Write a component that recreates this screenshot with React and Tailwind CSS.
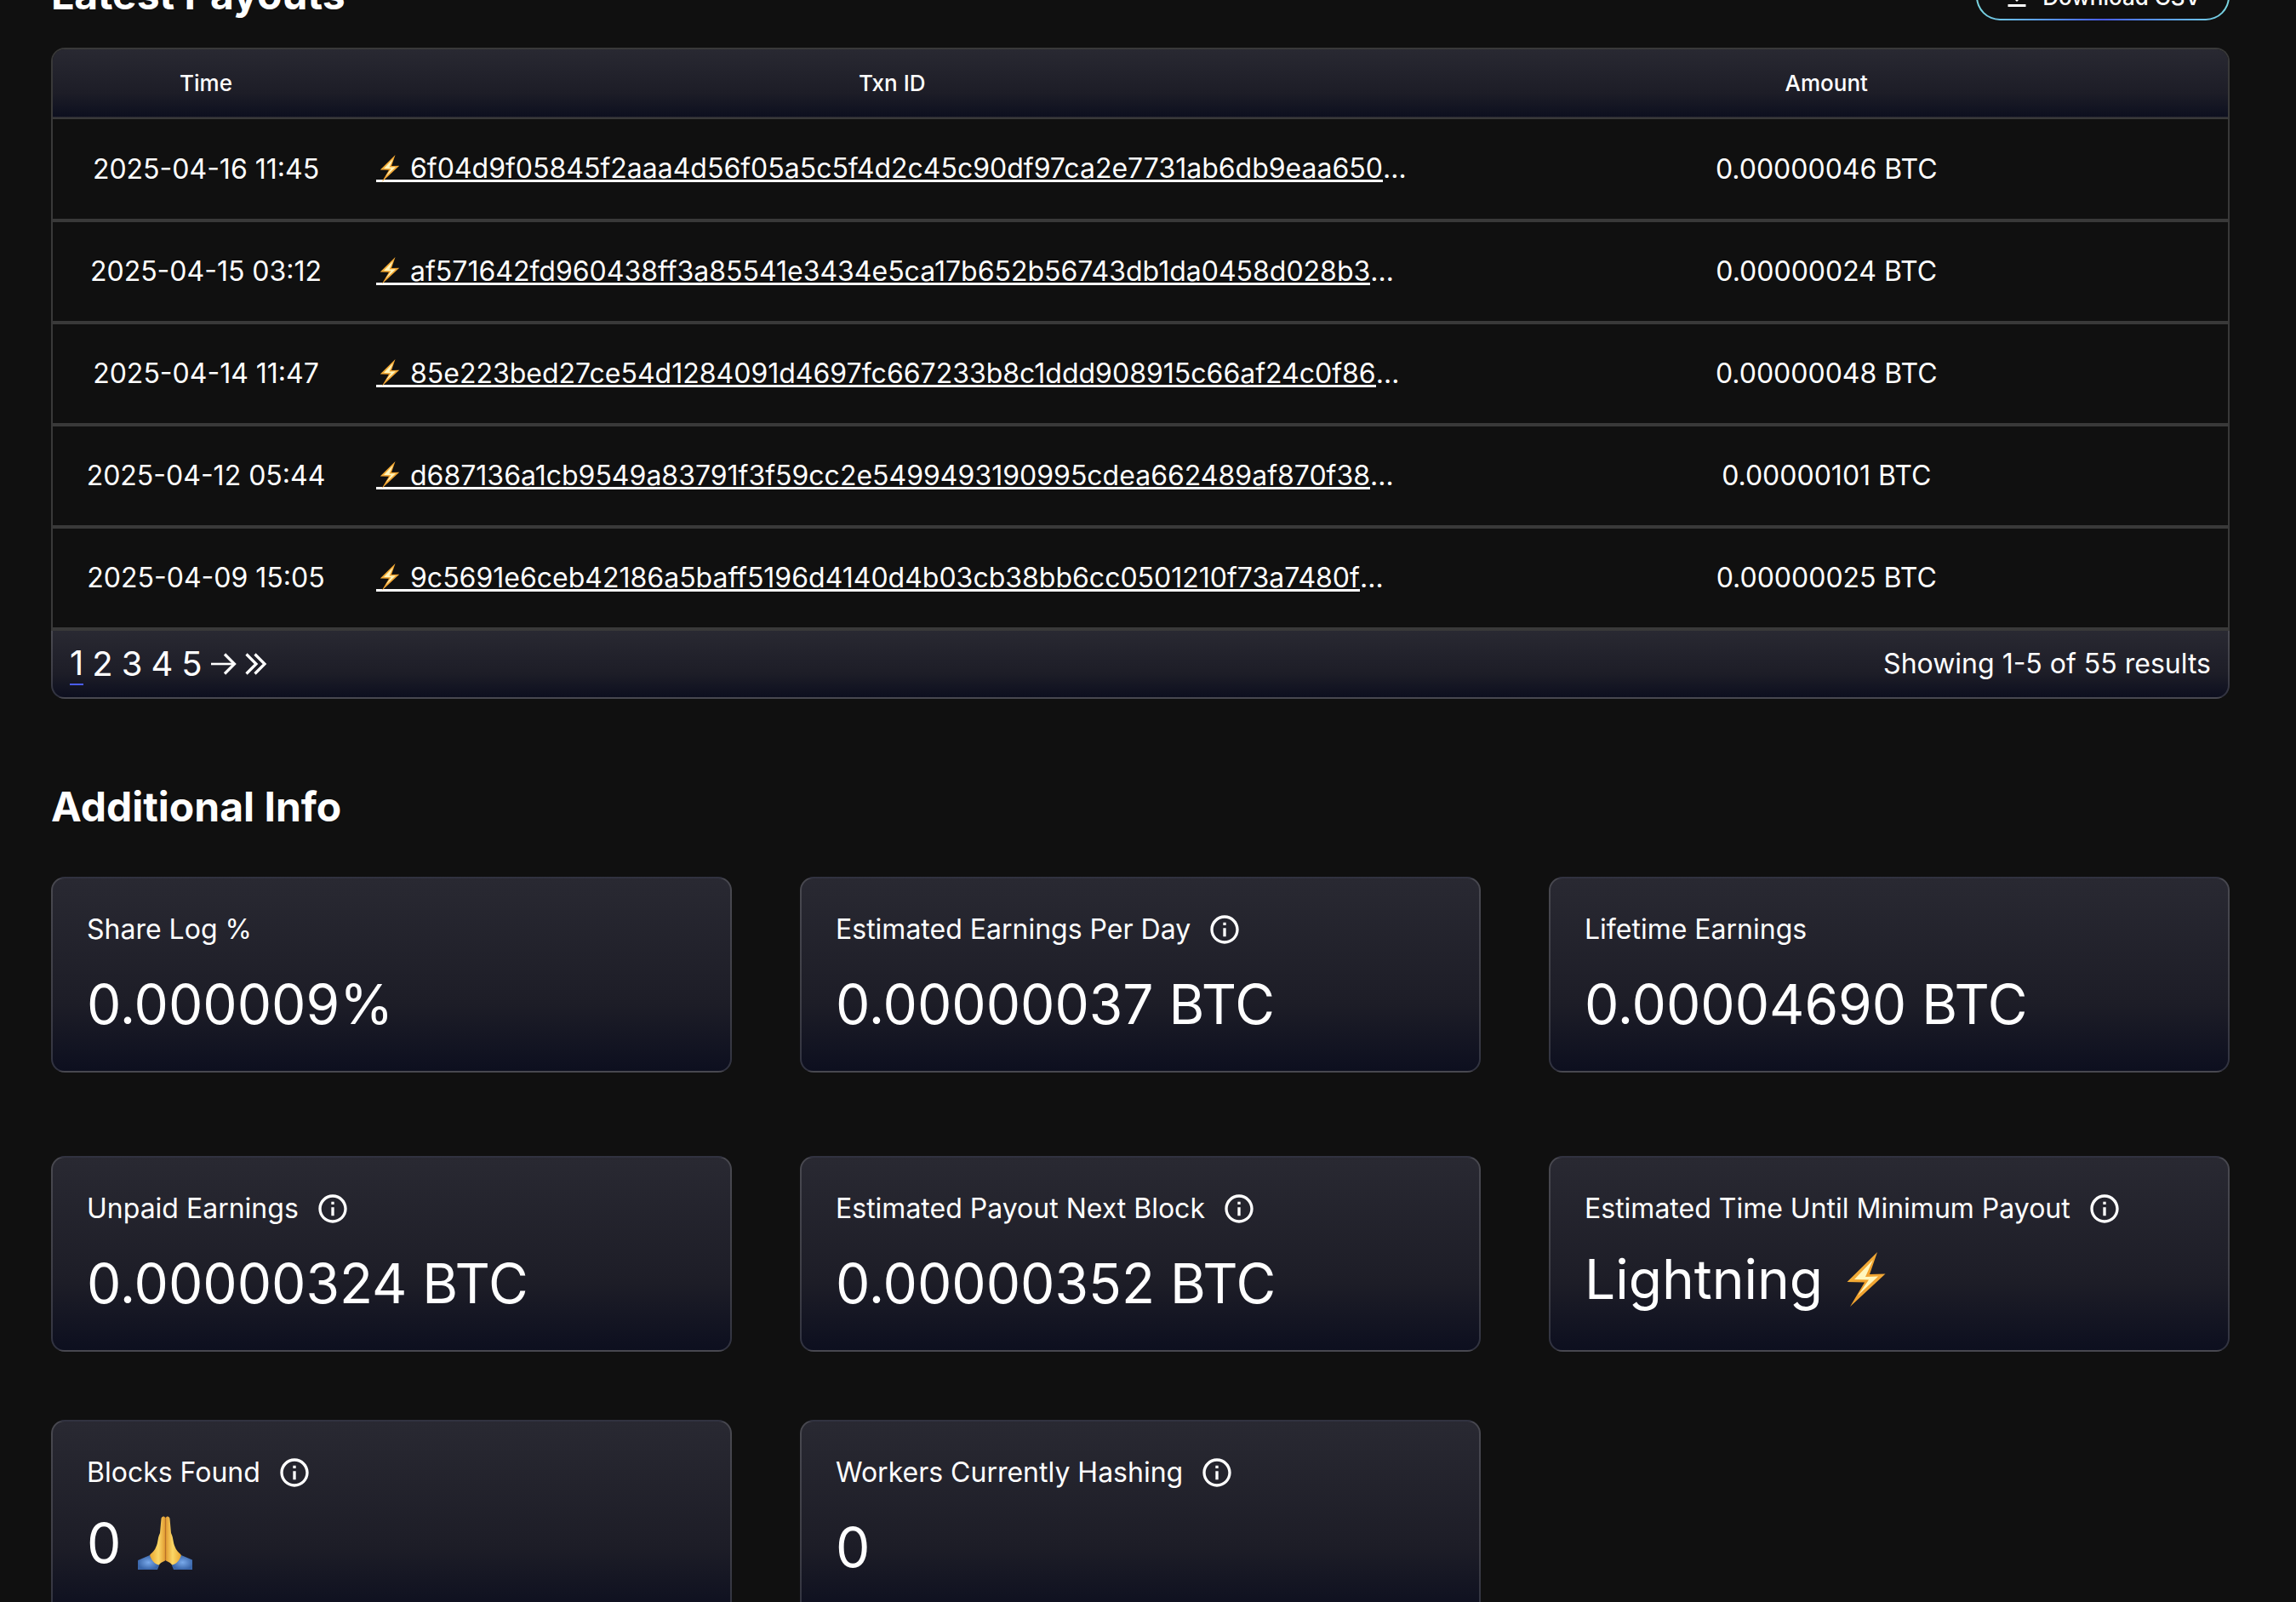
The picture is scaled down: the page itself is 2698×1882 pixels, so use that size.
import { MdInfoOutline, MdFileDownload } from 'react-icons/md';

const payouts = [
  {
    time: '2025-04-16 11:45',
    txn: '6f04d9f05845f2aaa4d56f05a5c5f4d2c45c90df97ca2e7731ab6db9eaa650',
    amount: '0.00000046 BTC',
  },
  {
    time: '2025-04-15 03:12',
    txn: 'af571642fd960438ff3a85541e3434e5ca17b652b56743db1da0458d028b3',
    amount: '0.00000024 BTC',
  },
  {
    time: '2025-04-14 11:47',
    txn: '85e223bed27ce54d1284091d4697fc667233b8c1ddd908915c66af24c0f86',
    amount: '0.00000048 BTC',
  },
  {
    time: '2025-04-12 05:44',
    txn: 'd687136a1cb9549a83791f3f59cc2e5499493190995cdea662489af870f38',
    amount: '0.00000101 BTC',
  },
  {
    time: '2025-04-09 15:05',
    txn: '9c5691e6ceb42186a5baff5196d4140d4b03cb38bb6cc0501210f73a7480f',
    amount: '0.00000025 BTC',
  },
];

function Bolt({ className }) {
  return (
    <svg className={className} viewBox="0 0 46 64" aria-hidden="true">
      <defs>
        <linearGradient id="bolt" x1="0" y1="0" x2="1" y2="1">
          <stop offset="0" stopColor="#f6c04a" />
          <stop offset="0.5" stopColor="#f0a02c" />
          <stop offset="1" stopColor="#f4b548" />
        </linearGradient>
      </defs>
      <path
        d="M36 0 L0.500 35 L21 35.500 L4 64 L45.500 25.500 L27 26 Z"
        fill="url(#bolt)"
      />
      <path
        d="M31 9 L9 32 L26 32.500 L13 51 L37 28.500 L22 29 Z"
        fill="#fff6bd"
      />
    </svg>
  );
}

function Hands({ className }) {
  return (
    <svg className={className} viewBox="0 0 64 64" aria-hidden="true">
      <defs>
        <linearGradient id="palm" x1="0" y1="0" x2="1" y2="0">
          <stop offset="0" stopColor="#e8a52f" />
          <stop offset="0.55" stopColor="#fbd766" />
          <stop offset="1" stopColor="#e0982f" />
        </linearGradient>
        <radialGradient id="sleeve">
          <stop offset="0" stopColor="#79a9ea" />
          <stop offset="1" stopColor="#3a66aa" />
        </radialGradient>
      </defs>
      <g id="hand">
        <path d="M0 52 L14 46 L25 58 L23 63 L0 63 Z" fill="url(#sleeve)" />
        <path
          d="M32.500 2 C31 -0.500 28 0 27.500 3 L26 20 C23 26 24 31 21 37 C19 42 16 43 14 46 C16 52 20 57 25 57.500 C27 54 30 54 32.500 52 Z"
          fill="url(#palm)"
        />
      </g>
      <use href="#hand" transform="matrix(-1 0 0 1 65 0)" />
      <path d="M32.500 4 V52" stroke="#b9722a" strokeWidth="1.200" />
    </svg>
  );
}

function NextPageIcon() {
  return (
    <svg
      className="h-[26px] w-[30px]"
      viewBox="0 0 30 26"
      fill="none"
      stroke="currentColor"
      strokeWidth="3.200"
      aria-hidden="true"
    >
      <path d="M0 13 H27" strokeWidth="2.600" />
      <path d="M16 1.500 L27.500 13 L16 24.500" />
    </svg>
  );
}

function LastPageIcon() {
  return (
    <svg
      className="size-[26px]"
      viewBox="0 0 26 26"
      fill="none"
      stroke="currentColor"
      strokeWidth="3.200"
      aria-hidden="true"
    >
      <path d="M1.500 1.500 L13 13 L1.500 24.500" />
      <path d="M11.500 1.500 L23 13 L11.500 24.500" />
    </svg>
  );
}

function Card({ label, info, icon, children }) {
  return (
    <div className="rounded-2xl border-2 border-white/15 bg-linear-to-b from-[#292932] via-[#1d1d27] via-65% to-[#0d0f1f] px-10 pt-10 pb-[38px]">
      <div className="mb-7 flex items-center gap-5 text-[32px] leading-10">
        <h3>{label}</h3>
        {info && (
          <button type="button" aria-label={'About ' + label}>
            <MdInfoOutline className="size-10" />
          </button>
        )}
      </div>
      <p
        className={
          icon
            ? 'flex items-center gap-5 text-[64px] leading-[70px]'
            : 'text-[64px] leading-[80px]'
        }
      >
        {children}
        {icon}
      </p>
    </div>
  );
}

function PayoutsTable() {
  return (
    <div>
      <div className="overflow-hidden rounded-t-2xl border-2 border-b-0 border-[#393939]">
        <table className="w-full table-fixed text-center">
          <thead>
            <tr className="h-[81px] border-b-2 border-[#393939] bg-linear-to-b from-[#292932] via-[#1d1d27] via-65% to-[#0d0f1f] text-[26px] leading-8">
              <th className="w-[360px] font-medium">Time</th>
              <th className="w-[49%] font-medium">Txn ID</th>
              <th className="font-medium">Amount</th>
            </tr>
          </thead>
          <tbody>
            {payouts.map(({ time, txn, amount }) => (
              <tr
                className="h-[120px] border-b-4 border-[#393939] text-[32px] leading-10"
                key={txn}
              >
                <td className="whitespace-nowrap">{time}</td>
                <td className="px-5 pt-2 text-left whitespace-nowrap">
                  <a className="inline-flex leading-[27px]" href="#txn">
                    <span className="flex items-center border-b-3 border-white">
                      <Bolt className="-my-1 mr-3 ml-1 h-8 w-6" />
                      {txn}
                    </span>
                    …
                  </a>
                </td>
                <td className="whitespace-nowrap">{amount}</td>
              </tr>
            ))}
          </tbody>
        </table>
      </div>
      <div className="flex h-20 items-center justify-between rounded-b-2xl border-2 border-t-0 border-white/15 bg-linear-to-b from-[#292932] via-[#1d1d27] via-65% to-[#0d0f1f] px-5">
        <nav className="flex items-center gap-[10px] text-[40px] leading-[48px]">
          <a className="border-b-2 border-[#4a5cf0]" href="#1">
            1
          </a>
          <a href="#2">2</a>
          <a href="#3">3</a>
          <a href="#4">4</a>
          <a href="#5">5</a>
          <a href="#next" aria-label="Next page">
            <NextPageIcon />
          </a>
          <a href="#last" aria-label="Last page">
            <LastPageIcon />
          </a>
        </nav>
        <p className="text-[32px] leading-10">Showing 1-5 of 55 results</p>
      </div>
    </div>
  );
}

export default function App() {
  return (
    <div className="h-screen overflow-hidden bg-[#101010] font-[Inter,sans-serif] text-white">
      <main className="-mt-9 pr-[78px] pl-[60px]">
        <div className="mb-8 flex items-end justify-between">
          <h2 className="text-[48px] leading-[60px] font-bold">
            Latest Payouts
          </h2>
          <button
            type="button"
            className="rounded-full bg-linear-to-r from-[#7ad7e0] via-[#4a5cf0] to-[#7ad7e0] p-0.5"
          >
            <span className="flex h-[52px] items-center gap-3 rounded-full bg-[#101010] pr-8 pl-7 text-[26px] font-medium">
              <MdFileDownload className="size-9" />
              Download CSV
            </span>
          </button>
        </div>

        <PayoutsTable />

        <h2 className="mt-[97px] mb-[52px] text-[48px] leading-[60px] font-bold">
          Additional Info
        </h2>
        <div className="mb-[98px] grid grid-cols-3 gap-20">
          <Card label="Share Log %">0.000009%</Card>
          <Card label="Estimated Earnings Per Day" info>
            0.00000037 BTC
          </Card>
          <Card label="Lifetime Earnings">0.00004690 BTC</Card>
        </div>
        <div className="grid grid-cols-3 gap-20">
          <Card label="Unpaid Earnings" info>
            0.00000324 BTC
          </Card>
          <Card label="Estimated Payout Next Block" info>
            0.00000352 BTC
          </Card>
          <Card
            label="Estimated Time Until Minimum Payout"
            info
            icon={<Bolt className="ml-2 h-16 w-[46px]" />}
          >
            Lightning
          </Card>
          <Card
            label="Blocks Found"
            info
            icon={<Hands className="size-16" />}
          >
            0
          </Card>
          <Card label="Workers Currently Hashing" info>
            0
          </Card>
        </div>
      </main>
    </div>
  );
}
